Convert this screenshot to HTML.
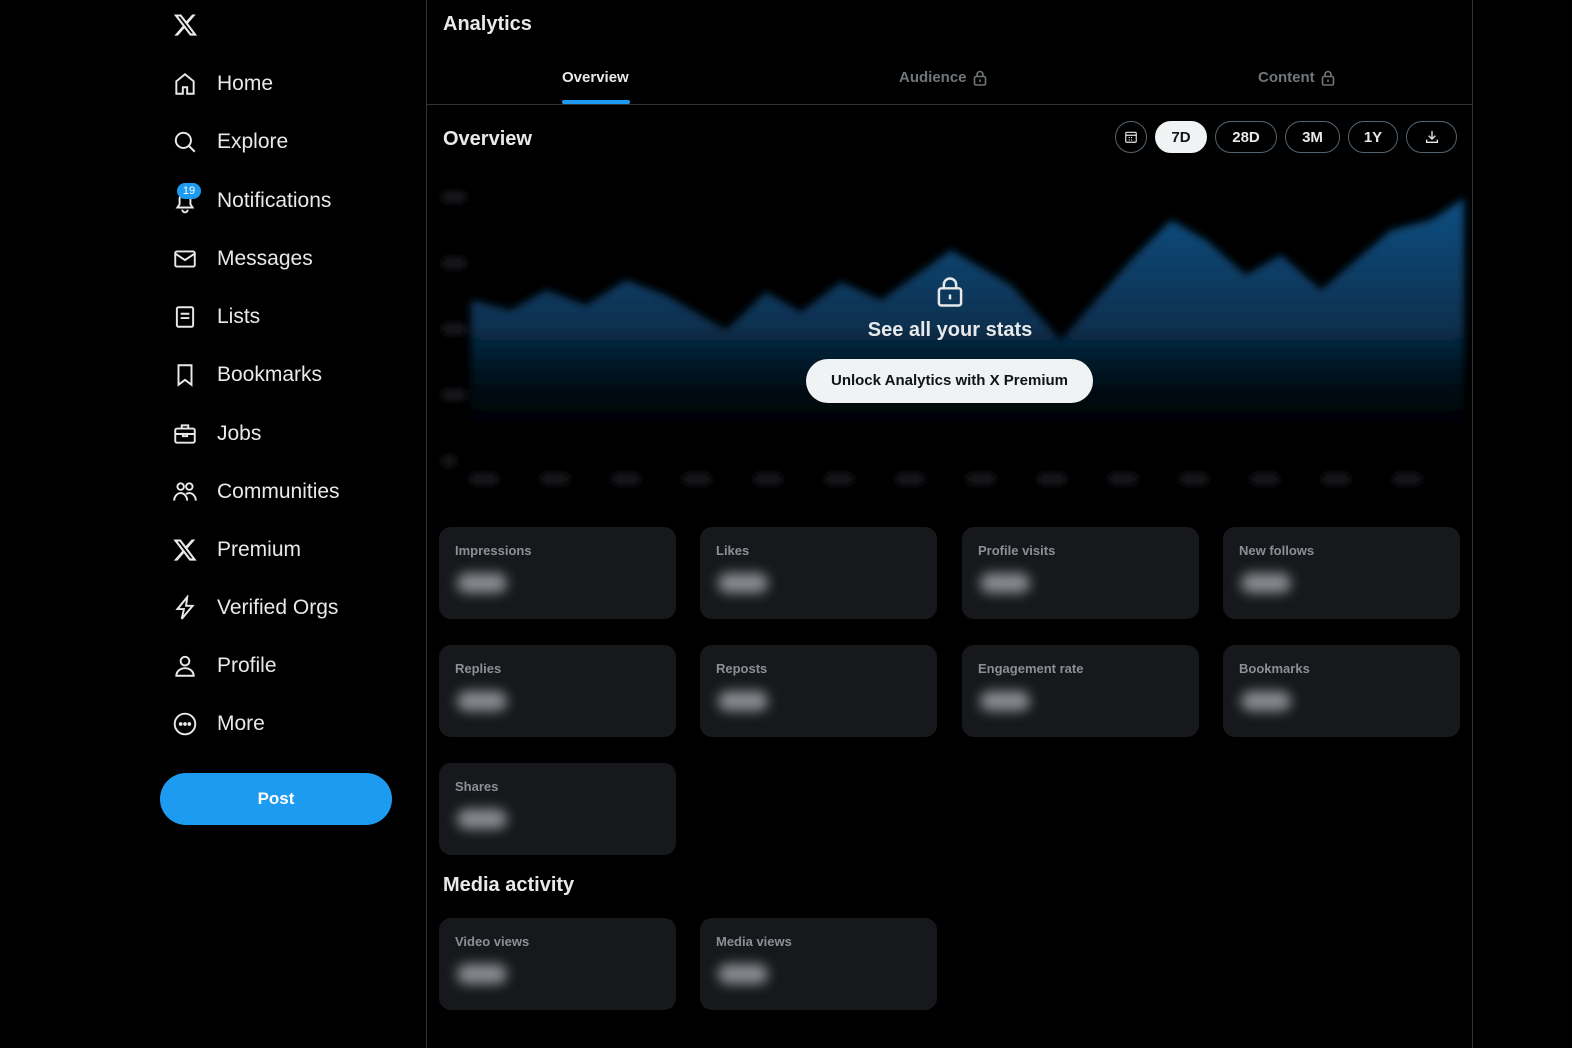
<!DOCTYPE html>
<html><head><style>
*{margin:0;padding:0;box-sizing:border-box}
body{width:1572px;height:1048px;background:#000;color:#e7e9ea;font-family:"Liberation Sans",sans-serif;position:relative;overflow:hidden}
.nav{position:absolute;left:160px;top:0;width:260px}
.item{position:absolute;left:12px;display:flex;align-items:center;font-size:21px;color:#e7e9ea}
.item svg{width:26px;height:26px;margin-right:19px;fill:none;stroke:#e7e9ea;stroke-width:1.8}
.main{position:absolute;left:426px;top:0;width:1047px;height:1048px;border-left:1px solid #2f3336;border-right:1px solid #2f3336}
.abs{position:absolute}
.pill{position:absolute;top:121px;height:32px;border:1px solid #536471;border-radius:16px;font-weight:bold;font-size:15px;display:flex;align-items:center;justify-content:center;color:#e7e9ea}
.card{position:absolute;width:237px;height:92px;background:#16181c;border-radius:12px}
.card .l{position:absolute;left:16px;top:16px;font-size:13px;color:#8b9097;font-weight:bold}
.card .b{position:absolute;left:18px;top:46px;width:50px;height:20px;background:#8a8d91;border-radius:10px;filter:blur(6px)}
.tab{position:absolute;top:69px;font-size:15px;color:#71767b;font-weight:bold;display:flex;align-items:center}
.tab svg{margin-left:6px}
</style></head><body>
<div class="nav">
<svg class="abs" style="left:12px;top:12px" width="27" height="26" viewBox="0 0 24 24"><path fill="#e7e9ea" d="M18.2 2.25h3.3l-7.2 8.26 8.5 11.24h-6.65l-5.2-6.8-5.97 6.8H1.68l7.73-8.84L1.25 2.25h6.8l4.7 6.23zm-1.16 17.52h1.83L7.08 4.13H5.12z"/></svg>
<div class="item" style="top:71px"><svg viewBox="0 0 24 24"><path d="M4 21V9.5L12 3l8 6.5V21h-6v-6h-4v6z"/></svg>Home</div>
<div class="item" style="top:129px"><svg viewBox="0 0 24 24"><circle cx="10.5" cy="10.5" r="7"/><path d="M15.5 15.5L21 21"/></svg>Explore</div>
<div class="item" style="top:188px"><svg viewBox="0 0 24 24"><path d="M5 18h14l-2-3v-5a5 5 0 0 0-10 0v5zM9.5 20a2.5 2.5 0 0 0 5 0"/></svg>Notifications</div>
<div class="abs" style="left:17px;top:183px;width:24px;height:16px;background:#1d9bf0;border-radius:8px;font-size:11px;color:#fff;text-align:center;line-height:16px">19</div>
<div class="item" style="top:246px"><svg viewBox="0 0 24 24"><rect x="3" y="5" width="18" height="14" rx="1.5"/><path d="M3 7l9 6 9-6"/></svg>Messages</div>
<div class="item" style="top:304px"><svg viewBox="0 0 24 24"><rect x="4.5" y="3" width="15" height="18" rx="1.5"/><path d="M8 9h8M8 13h8"/></svg>Lists</div>
<div class="item" style="top:362px"><svg viewBox="0 0 24 24"><path d="M6 3h12v18l-6-4.5L6 21z"/></svg>Bookmarks</div>
<div class="item" style="top:421px"><svg viewBox="0 0 24 24"><rect x="3" y="7" width="18" height="13" rx="1.5"/><path d="M9 7V4h6v3M3 12h18M10 11v3h4v-3"/></svg>Jobs</div>
<div class="item" style="top:479px"><svg viewBox="0 0 24 24"><circle cx="8" cy="7" r="3"/><circle cx="16" cy="7" r="3"/><path d="M2 20c0-4 3-7 6-7s6 3 6 7M13 14c1-1 2-1 3-1 3 0 6 3 6 7"/></svg>Communities</div>
<div class="item" style="top:537px"><svg viewBox="0 0 24 24"><path fill="#e7e9ea" stroke="none" d="M18.2 2.25h3.3l-7.2 8.26 8.5 11.24h-6.65l-5.2-6.8-5.970 6.8H1.68l7.73-8.84L1.25 2.25h6.8l4.7 6.23zm-1.16 17.52h1.83L7.08 4.13H5.12z"/></svg>Premium</div>
<div class="item" style="top:595px"><svg viewBox="0 0 24 24"><path d="M14 2L5 13h6l-2 9 10-12h-6z"/></svg>Verified Orgs</div>
<div class="item" style="top:653px"><svg viewBox="0 0 24 24"><circle cx="12" cy="7.5" r="4"/><path d="M4 21c0-4 3.5-7 8-7s8 3 8 7z"/></svg>Profile</div>
<div class="item" style="top:711px"><svg viewBox="0 0 24 24"><circle cx="12" cy="12" r="9.5"/><circle cx="8" cy="12" r=".8" fill="#e7e9ea"/><circle cx="12" cy="12" r=".8" fill="#e7e9ea"/><circle cx="16" cy="12" r=".8" fill="#e7e9ea"/></svg>More</div>
<div class="abs" style="left:0;top:773px;width:232px;height:52px;background:#1d9bf0;border-radius:26px;color:#fff;font-weight:bold;font-size:17px;text-align:center;line-height:52px">Post</div>
</div>
<div class="main">
<div class="abs" style="left:16px;top:13px;font-size:20px;font-weight:bold">Analytics</div>
<div class="abs" style="left:135px;top:69px;font-size:15px;font-weight:bold">Overview</div>
<div class="abs" style="left:135px;top:100px;width:68px;height:4px;background:#1d9bf0;border-radius:2px"></div>
<div class="tab" style="left:472px">Audience<svg width="14" height="16" viewBox="0 0 14 16" fill="none" stroke="#71767b" stroke-width="1.6"><rect x="1.5" y="6.5" width="11" height="8.5" rx="1.5"/><path d="M4 6.5V4.5a3 3 0 0 1 6 0v2M7 9.5v2.5"/></svg></div>
<div class="tab" style="left:831px">Content<svg width="14" height="16" viewBox="0 0 14 16" fill="none" stroke="#71767b" stroke-width="1.6"><rect x="1.5" y="6.5" width="11" height="8.5" rx="1.5"/><path d="M4 6.5V4.5a3 3 0 0 1 6 0v2M7 9.5v2.5"/></svg></div>
<div class="abs" style="left:0;top:104px;width:1046px;height:1px;background:#2f3336"></div>
<div class="abs" style="left:16px;top:128px;font-size:20px;font-weight:bold">Overview</div>
<div class="pill" style="left:688px;width:32px"><svg width="14" height="14" viewBox="0 0 24 24" fill="none" stroke="#e7e9ea" stroke-width="2"><rect x="3" y="4" width="18" height="17" rx="2"/><path d="M3 9h18M8 13h2M12 13h2M16 13h0M8 17h2M12 17h2"/></svg></div>
<div class="pill" style="left:728px;width:52px;background:#eff3f4;color:#0f1419;border-color:#eff3f4">7D</div>
<div class="pill" style="left:788px;width:62px">28D</div>
<div class="pill" style="left:858px;width:55px">3M</div>
<div class="pill" style="left:921px;width:50px">1Y</div>
<div class="pill" style="left:979px;width:51px"><svg width="16" height="16" viewBox="0 0 24 24" fill="none" stroke="#e7e9ea" stroke-width="2"><path d="M12 3v12M7 10l5 5 5-5M4 16v4h16v-4"/></svg></div>
<svg class="abs" style="left:0;top:170px" width="1046" height="330">
<defs><linearGradient id="g" x1="0" y1="0" x2="0" y2="1"><stop offset="0" stop-color="#0d4f82"/><stop offset=".5" stop-color="#08304f"/><stop offset="1" stop-color="#000" stop-opacity="0"/></linearGradient><filter id="bl"><feGaussianBlur stdDeviation="4"/></filter></defs>
<g filter="url(#bl)">
<path fill="url(#g)" d="M44 130L84 140L119 120L159 135L199 110L239 125L299 160L339 122L374 142L414 112L454 130L524 80L584 115L634 170L704 90L744 50L779 70L819 105L854 85L894 120L964 60L1004 50L1037 28V285H44z"/>
<g fill="#1a1c20"><rect x="16" y="22" width="22" height="10"/><rect x="16" y="88" width="22" height="10"/><rect x="16" y="154" width="22" height="10"/><rect x="16" y="220" width="22" height="10"/><rect x="16" y="286" width="12" height="10"/>
<rect x="44" y="304" width="26" height="10"/><rect x="115" y="304" width="26" height="10"/><rect x="186" y="304" width="26" height="10"/><rect x="257" y="304" width="26" height="10"/><rect x="328" y="304" width="26" height="10"/><rect x="399" y="304" width="26" height="10"/><rect x="470" y="304" width="26" height="10"/><rect x="541" y="304" width="26" height="10"/><rect x="612" y="304" width="26" height="10"/><rect x="683" y="304" width="26" height="10"/><rect x="754" y="304" width="26" height="10"/><rect x="825" y="304" width="26" height="10"/><rect x="896" y="304" width="26" height="10"/><rect x="967" y="304" width="26" height="10"/></g>
</g>
</svg>
<svg class="abs" style="left:508px;top:276px" width="30" height="32" viewBox="0 0 24 26" fill="none" stroke="#e7e9ea" stroke-width="2"><rect x="3" y="10" width="18" height="14" rx="2"/><path d="M7 10V7a5 5 0 0 1 10 0v3M12 15v4"/></svg>
<div class="abs" style="left:0;width:1046px;top:319px;text-align:center;font-size:20px;font-weight:bold">See all your stats</div>
<div class="abs" style="left:379px;top:359px;width:287px;height:44px;background:#eff3f4;color:#0f1419;border-radius:22px;font-weight:bold;font-size:15px;text-align:center;line-height:44px">Unlock Analytics with X Premium</div>
<div class="card" style="left:12px;top:527px"><div class="l">Impressions</div><div class="b"></div></div>
<div class="card" style="left:273px;top:527px"><div class="l">Likes</div><div class="b"></div></div>
<div class="card" style="left:535px;top:527px"><div class="l">Profile visits</div><div class="b"></div></div>
<div class="card" style="left:796px;top:527px"><div class="l">New follows</div><div class="b"></div></div>
<div class="card" style="left:12px;top:645px"><div class="l">Replies</div><div class="b"></div></div>
<div class="card" style="left:273px;top:645px"><div class="l">Reposts</div><div class="b"></div></div>
<div class="card" style="left:535px;top:645px"><div class="l">Engagement rate</div><div class="b"></div></div>
<div class="card" style="left:796px;top:645px"><div class="l">Bookmarks</div><div class="b"></div></div>
<div class="card" style="left:12px;top:763px"><div class="l">Shares</div><div class="b"></div></div>
<div class="abs" style="left:16px;top:874px;font-size:20px;font-weight:bold">Media activity</div>
<div class="card" style="left:12px;top:918px"><div class="l">Video views</div><div class="b"></div></div>
<div class="card" style="left:273px;top:918px"><div class="l">Media views</div><div class="b"></div></div>
</div>
</body></html>
